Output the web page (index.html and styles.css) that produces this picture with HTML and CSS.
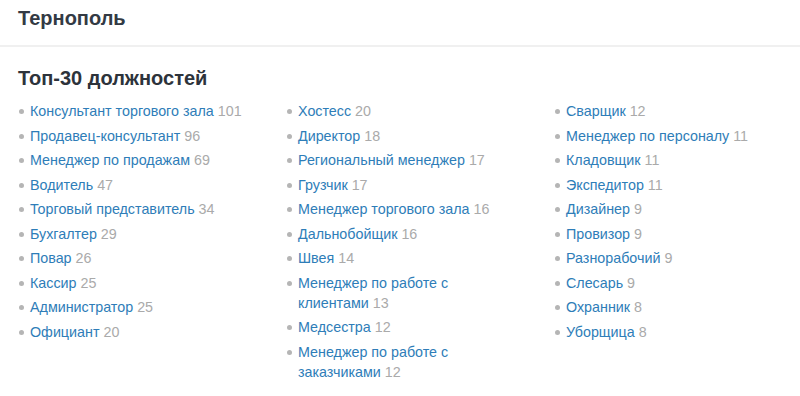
FILE: index.html
```html
<!DOCTYPE html>
<html lang="ru">
<head>
<meta charset="utf-8">
<title>Тернополь</title>
<link rel="stylesheet" href="styles.css">
</head>
<body>
<header class="city">
  <h1 class="city-title">Тернополь</h1>
</header>
<section class="top">
  <h2 class="top-title">Топ-30 должностей</h2>
  <div class="cols">
    <ul class="list">
      <li><a href="#">Консультант торгового зала</a> <span class="num">101</span></li>
      <li><a href="#">Продавец-консультант</a> <span class="num">96</span></li>
      <li><a href="#">Менеджер по продажам</a> <span class="num">69</span></li>
      <li><a href="#">Водитель</a> <span class="num">47</span></li>
      <li><a href="#">Торговый представитель</a> <span class="num">34</span></li>
      <li><a href="#">Бухгалтер</a> <span class="num">29</span></li>
      <li><a href="#">Повар</a> <span class="num">26</span></li>
      <li><a href="#">Кассир</a> <span class="num">25</span></li>
      <li><a href="#">Администратор</a> <span class="num">25</span></li>
      <li><a href="#">Официант</a> <span class="num">20</span></li>
    </ul>
    <ul class="list">
      <li><a href="#">Хостесс</a> <span class="num">20</span></li>
      <li><a href="#">Директор</a> <span class="num">18</span></li>
      <li><a href="#">Региональный менеджер</a> <span class="num">17</span></li>
      <li><a href="#">Грузчик</a> <span class="num">17</span></li>
      <li><a href="#">Менеджер торгового зала</a> <span class="num">16</span></li>
      <li><a href="#">Дальнобойщик</a> <span class="num">16</span></li>
      <li><a href="#">Швея</a> <span class="num">14</span></li>
      <li><a href="#">Менеджер по работе с клиентами</a> <span class="num">13</span></li>
      <li><a href="#">Медсестра</a> <span class="num">12</span></li>
      <li><a href="#">Менеджер по работе с заказчиками</a> <span class="num">12</span></li>
    </ul>
    <ul class="list">
      <li><a href="#">Сварщик</a> <span class="num">12</span></li>
      <li><a href="#">Менеджер по персоналу</a> <span class="num">11</span></li>
      <li><a href="#">Кладовщик</a> <span class="num">11</span></li>
      <li><a href="#">Экспедитор</a> <span class="num">11</span></li>
      <li><a href="#">Дизайнер</a> <span class="num">9</span></li>
      <li><a href="#">Провизор</a> <span class="num">9</span></li>
      <li><a href="#">Разнорабочий</a> <span class="num">9</span></li>
      <li><a href="#">Слесарь</a> <span class="num">9</span></li>
      <li><a href="#">Охранник</a> <span class="num">8</span></li>
      <li><a href="#">Уборщица</a> <span class="num">8</span></li>
    </ul>
  </div>
</section>
</body>
</html>
```
FILE: styles.css
```css
* { box-sizing: border-box; }
body {
  margin: 0;
  background: #fff;
  font-family: "Liberation Sans", Arial, sans-serif;
  color: #333;
}
.city {
  padding: 6px 18px 0;
  height: 47px;
  border-bottom: 2px solid #f0f0f0;
}
.city-title {
  margin: 0;
  font-size: 20px;
  line-height: 24px;
  font-weight: bold;
  color: #333a44;
}
.top {
  padding: 19px 18px 0;
}
.top-title {
  margin: 0 0 11px;
  font-size: 20px;
  line-height: 24px;
  font-weight: bold;
  color: #2d333b;
}
.cols {
  display: grid;
  grid-template-columns: repeat(3, 268px);
}
.list {
  list-style: none;
  margin: 0;
  padding: 0 38px 0 0;
}
.list li {
  position: relative;
  padding-left: 12px;
  font-size: 14.3px;
  line-height: 20px;
  margin-bottom: 4.5px;
}
.list li::before {
  content: "";
  position: absolute;
  left: 1px;
  top: 8px;
  width: 5px;
  height: 5px;
  border-radius: 50%;
  background: #b5b5b5;
}
.list a {
  color: #2e7db8;
  text-decoration: none;
}
.num {
  color: #aaa;
}
```
